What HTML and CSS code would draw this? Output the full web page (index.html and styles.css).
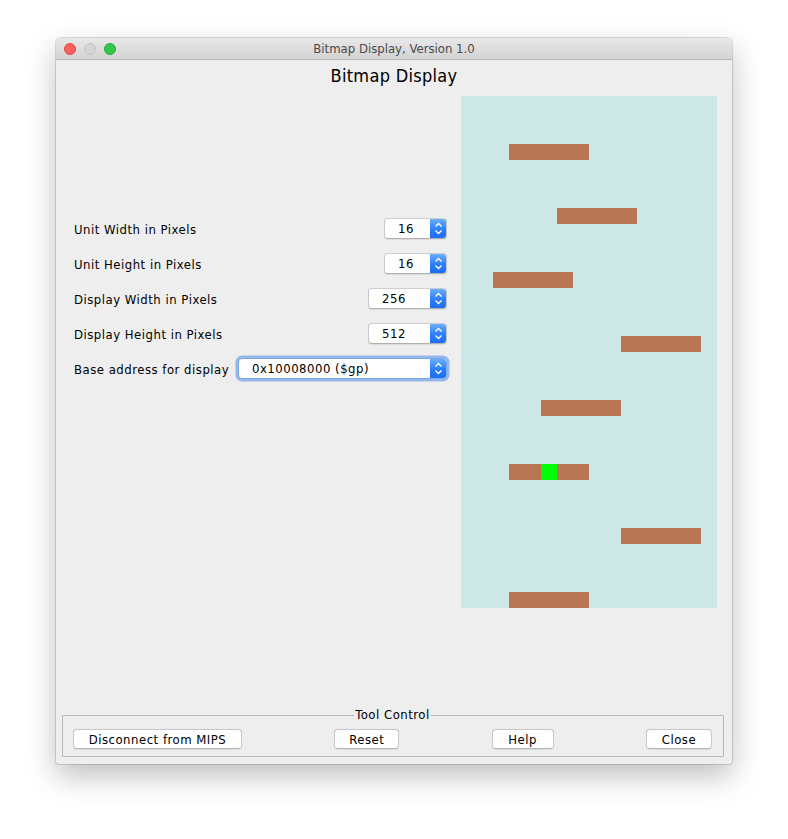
FILE: index.html
```html
<!DOCTYPE html>
<html>
<head>
<meta charset="utf-8">
<title>Bitmap Display</title>
<link rel="stylesheet" href="styles.css">
</head>
<body>
<div class="window">
  <div class="titlebar">
    <div class="lights">
      <span class="light red"></span>
      <span class="light gray"></span>
      <span class="light green"></span>
    </div>
    <div class="title">Bitmap Display, Version 1.0</div>
  </div>
  <div class="content">
    <h1 class="heading">Bitmap Display</h1>
    <div class="main">
      <div class="settings">
        <div class="row">
          <span class="label">Unit Width in Pixels</span>
          <div class="combo small"><span class="value">16</span><span class="arrows"><svg width="17" height="21" viewBox="0 0 17 21"><path d="M5.5 8.5 L8.5 5.5 L11.5 8.5 M5.5 12.5 L8.5 15.5 L11.5 12.5" fill="none" stroke="#fff" stroke-width="1.3"/></svg></span></div>
        </div>
        <div class="row">
          <span class="label">Unit Height in Pixels</span>
          <div class="combo small"><span class="value">16</span><span class="arrows"><svg width="17" height="21" viewBox="0 0 17 21"><path d="M5.5 8.5 L8.5 5.5 L11.5 8.5 M5.5 12.5 L8.5 15.5 L11.5 12.5" fill="none" stroke="#fff" stroke-width="1.3"/></svg></span></div>
        </div>
        <div class="row">
          <span class="label">Display Width in Pixels</span>
          <div class="combo medium"><span class="value">256</span><span class="arrows"><svg width="17" height="21" viewBox="0 0 17 21"><path d="M5.5 8.5 L8.5 5.5 L11.5 8.5 M5.5 12.5 L8.5 15.5 L11.5 12.5" fill="none" stroke="#fff" stroke-width="1.3"/></svg></span></div>
        </div>
        <div class="row">
          <span class="label">Display Height in Pixels</span>
          <div class="combo medium"><span class="value">512</span><span class="arrows"><svg width="17" height="21" viewBox="0 0 17 21"><path d="M5.5 8.5 L8.5 5.5 L11.5 8.5 M5.5 12.5 L8.5 15.5 L11.5 12.5" fill="none" stroke="#fff" stroke-width="1.3"/></svg></span></div>
        </div>
        <div class="row">
          <span class="label">Base address for display</span>
          <div class="combo wide focused"><span class="value">0x10008000 ($gp)</span><span class="arrows"><svg width="17" height="21" viewBox="0 0 17 21"><path d="M5.5 8.5 L8.5 5.5 L11.5 8.5 M5.5 12.5 L8.5 15.5 L11.5 12.5" fill="none" stroke="#fff" stroke-width="1.3"/></svg></span></div>
        </div>
      </div>
      <div class="bitmap">
        <div class="block" style="grid-column: 4 / span 5; grid-row: 4;"></div>
        <div class="block" style="grid-column: 7 / span 5; grid-row: 8;"></div>
        <div class="block" style="grid-column: 3 / span 5; grid-row: 12;"></div>
        <div class="block" style="grid-column: 11 / span 5; grid-row: 16;"></div>
        <div class="block" style="grid-column: 6 / span 5; grid-row: 20;"></div>
        <div class="block" style="grid-column: 4 / span 5; grid-row: 24;"></div>
        <div class="cursor" style="grid-column: 6 / span 1; grid-row: 24;"></div>
        <div class="block" style="grid-column: 11 / span 5; grid-row: 28;"></div>
        <div class="block" style="grid-column: 4 / span 5; grid-row: 32;"></div>
      </div>
    </div>
    <fieldset class="tool-control">
      <legend>Tool Control</legend>
      <button class="btn btn-disconnect">Disconnect from MIPS</button>
      <button class="btn btn-reset">Reset</button>
      <button class="btn btn-help">Help</button>
      <button class="btn btn-close">Close</button>
    </fieldset>
  </div>
</div>
</body>
</html>
```

FILE: styles.css
```css
html, body {
  margin: 0;
  padding: 0;
  background: #ffffff;
}

body {
  padding: 38px 0 75px 56px;
  font-family: "DejaVu Sans Condensed", "DejaVu Sans", sans-serif;
  font-stretch: semi-condensed;
  font-size: 13px;
  letter-spacing: 0.5px;
  color: #000;
}

.window {
  width: 676px;
  height: 726px;
  background: #eeeeee;
  border-radius: 5px 5px 3px 3px;
  box-shadow: 0 0 0 1px rgba(0, 0, 0, 0.13), 0 12px 30px rgba(0, 0, 0, 0.26);
  display: flex;
  flex-direction: column;
  overflow: hidden;
}

.titlebar {
  height: 21px;
  flex: none;
  display: flex;
  align-items: center;
  position: relative;
  background: linear-gradient(#e9e8e9, #d4d3d4);
  border-bottom: 1px solid #b8b8b8;
}

.lights {
  display: flex;
  gap: 8px;
  padding-left: 8px;
}

.light {
  width: 12px;
  height: 12px;
  border-radius: 50%;
  box-sizing: border-box;
}

.light.red {
  background: #fc605c;
  border: 0.5px solid #de4a45;
}

.light.gray {
  background: #d6d6d6;
  border: 0.5px solid #c2c2c2;
}

.light.green {
  background: #34c84a;
  border: 0.5px solid #27aa37;
}

.title {
  position: absolute;
  left: 0;
  right: 0;
  top: 0;
  line-height: 21px;
  text-align: center;
  color: #4a4a4a;
  font-size: 13px;
  letter-spacing: 0;
  pointer-events: none;
}

.content {
  flex: 1;
  display: flex;
  flex-direction: column;
}

.heading {
  margin: 6px 0 10px;
  line-height: 20px;
  font-size: 18px;
  letter-spacing: 0.3px;
  font-weight: normal;
  text-align: center;
  color: #000;
}

.main {
  display: flex;
  padding-left: 18px;
  gap: 14px;
}

.settings {
  width: 373px;
  padding-top: 122px;
  display: flex;
  flex-direction: column;
  gap: 14px;
}

.row {
  height: 21px;
  display: flex;
  align-items: center;
  justify-content: space-between;
}

.label {
  color: #000;
  padding-top: 2px;
}

.combo {
  height: 21px;
  box-sizing: border-box;
  display: flex;
  background: #fff;
  border: 1px solid #c6c6c6;
  border-top-color: #cfcfcf;
  border-bottom-color: #b0b0b0;
  border-radius: 4px;
  box-shadow: 0 0.5px 1px rgba(0, 0, 0, 0.08);
  overflow: hidden;
}

.combo.small {
  width: 63px;
}

.combo.medium {
  width: 79px;
}

.combo.wide {
  width: 209px;
}

.combo.focused {
  border-color: #7aa7e6;
  box-shadow: 0 0 0 2.5px rgba(117, 165, 235, 0.75);
}

.value {
  flex: 1;
  padding-left: 13px;
  line-height: 20px;
  color: #000;
  white-space: nowrap;
}

.arrows {
  width: 17px;
  flex: none;
  display: flex;
  align-items: center;
  justify-content: center;
  margin: -1px -1px -1px 0;
  background: linear-gradient(#6eb3fb, #2b7ef7 55%, #1b6cf2);
}

.arrows svg {
  display: block;
}

.bitmap {
  width: 256px;
  height: 512px;
  background: #cde7e7;
  display: grid;
  grid-template-columns: repeat(16, 16px);
  grid-template-rows: repeat(32, 16px);
}

.block {
  background: #b87654;
}

.cursor {
  background: #00ff00;
}

.tool-control {
  margin: auto 8px 7px 6px;
  padding: 6px 11px 7px 10px;
  border: 1px solid #b8b8b8;
  border-radius: 1px;
  display: flex;
  justify-content: space-between;
  align-items: center;
}

.tool-control legend {
  margin: 0 auto;
  padding: 0 1px;
  color: #000;
  line-height: 16px;
}

.btn {
  height: 20px;
  padding: 0;
  font-family: inherit;
  font-stretch: inherit;
  font-size: 13px;
  letter-spacing: 0.5px;
  color: #000;
  background: #fff;
  border: 1px solid #c8c8c8;
  border-bottom-color: #b4b4b4;
  border-radius: 4px;
  box-shadow: 0 0.5px 1px rgba(0, 0, 0, 0.08);
  line-height: 19px;
}

.btn-disconnect {
  width: 169px;
}

.btn-reset {
  width: 65px;
}

.btn-help {
  width: 62px;
}

.btn-close {
  width: 66px;
}
```
